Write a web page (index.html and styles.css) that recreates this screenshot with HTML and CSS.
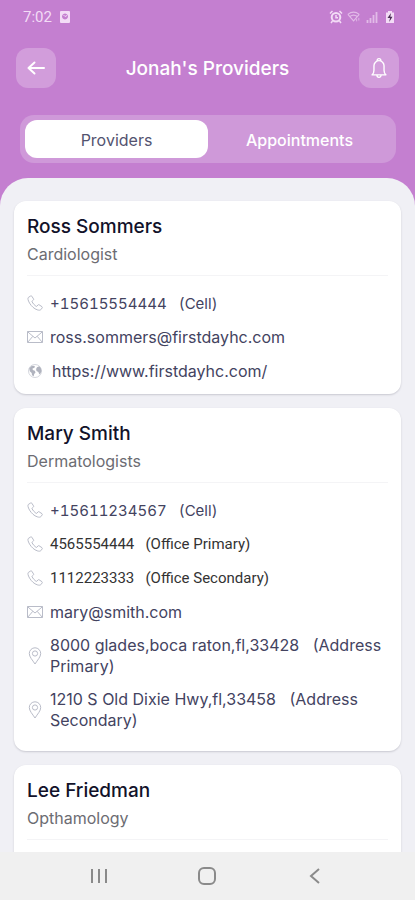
FILE: index.html
```html
<!DOCTYPE html>
<html lang="en">
<head>
<meta charset="utf-8">
<meta name="viewport" content="width=device-width, initial-scale=1">
<title>Jonah's Providers</title>
<link rel="stylesheet" href="styles.css">
</head>
<body>
<svg class="defs" aria-hidden="true">
  <symbol id="phone" viewBox="0 0 16 16"><path d="M3.6 1 1.4 2.4C.6 3 .8 5.2 2.6 8.2c1.900 3.100 4.600 5.600 7.600 6.600 1.800.6 3 .5 3.600-.1l1.400-1.800c.3-.5.2-.9-.2-1.200l-2.900-1.900c-.5-.3-.9-.2-1.200.2l-.9 1.100c-.3.400-.7.400-1.100.1C7.200 10 6 8.500 5.100 6.900c-.2-.4-.1-.8.2-1l1-.8c.4-.3.5-.7.200-1.200L4.800 1.200C4.500.8 4 .7 3.600 1z"/></symbol>
  <symbol id="mail" viewBox="0 0 16 16"><path d="M.5 2.500h15v11H.5zM.5 2.700 8 9l7.500-6.300M.7 13.300l5.100-6M15.300 13.300l-5.100-6"/></symbol>
  <symbol id="globe" viewBox="0 0 16 16"><circle cx="8" cy="8" r="6.500"/><path class="land" d="M2.200 5.200 4.800 2.700l3 .4-.3 1.700-2 .8.3 1.300 2 .9.700 1.800-1.300 1.400-.5 2.200-1.700-1-.3-2.300-1.900-1.600zM10 4.200l2.300-1 1.600 2 .6 2.800-1 2.600-1.300.600-.8-2.300-1.900-.8-.4-2z"/></symbol>
  <symbol id="pin" viewBox="0 0 16 18"><path d="M8 17C5.500 13 2.300 10 2.300 6.500a5.700 5.700 0 0 1 11.400 0C13.700 10 10.500 13 8 17z"/><circle cx="8" cy="6.500" r="2.600"/></symbol>
</svg>
<div class="app">
  <header class="top">
    <div class="status">
      <span class="clock">7:02</span>
      <svg class="s-icon" viewBox="0 0 12 14"><path fill="currentColor" fill-rule="evenodd" d="M2 1h8q1 0 1 1v10q0 1-1 1H2q-1 0-1-1V2q0-1 1-1zm4 2.500a3 3 0 1 0 .01 0z"/><path fill="none" stroke="currentColor" d="M4.500 5 6 6.500 8 5.500"/></svg>
      <span class="tray">
        <svg class="s-icon" viewBox="0 0 14 14"><circle cx="7" cy="7.300" r="4.300" fill="none" stroke="currentColor" stroke-width="2"/><path d="M7 5v2.800h2M1 3.500 3.500 1M13 3.500 10.500 1M3.500 11 2 13M10.500 11 12 13" fill="none" stroke="currentColor" stroke-width="1.500"/></svg>
        <svg class="s-icon faint" viewBox="0 0 16 14"><path d="M1 4q6.500-5 13 0M3.300 6.500q4.200-3.200 8.400 0M1 4l6.500 7.500L14 4" fill="none" stroke="currentColor" stroke-width="1.300"/><path d="M11 9v3M13.500 8v3" stroke="currentColor"/></svg>
        <svg class="s-icon faint" viewBox="0 0 12 14"><path d="M1.500 10v3M4.500 8v5M7.500 5v8M10.500 2v11" stroke="currentColor" stroke-width="1.800"/></svg>
        <svg class="s-icon" viewBox="0 0 12 14"><path d="M4 1h4v1.500h2V13H2V2.500h2z" fill="currentColor"/><path d="M7 3 3.500 8H6l-.8 4L8.500 6.800H6.300z" fill="#4b2e55"/></svg>
      </span>
    </div>
    <div class="bar">
      <button class="square" aria-label="Back"><svg class="arrow" viewBox="0 0 20 20"><path d="M18 10H2.500M8.500 4.500 2.500 10l6 5.500"/></svg></button>
      <h1>Jonah's Providers</h1>
      <button class="square" aria-label="Notifications"><svg class="bell" viewBox="0 0 20 24"><path d="M2.500 19.500c1.700-1.500 2-3 2-5V9.500a5.500 5.500 0 0 1 11 0v5c0 2 .3 3.500 2 5z"/><path d="M8 3.800a2 2 0 1 1 4 0M7.800 20a2.200 2.200 0 0 0 4.400 0"/></svg></button>
    </div>
    <nav class="tabs">
      <button class="tab active">Providers</button>
      <button class="tab">Appointments</button>
    </nav>
  </header>
  <main class="sheet">
    <article class="card">
      <header><h2>Ross Sommers</h2><p>Cardiologist</p></header>
      <ul>
        <li><svg><use href="#phone"/></svg><a class="cell" href="tel:+15615554444">+15615554444 &nbsp; (Cell)</a></li>
        <li><svg><use href="#mail"/></svg><a href="mailto:ross.sommers@firstdayhc.com">ross.sommers@firstdayhc.com</a></li>
        <li><svg class="web"><use href="#globe"/></svg><a href="https://www.firstdayhc.com/">https://www.firstdayhc.com/</a></li>
      </ul>
    </article>
    <article class="card">
      <header><h2>Mary Smith</h2><p>Dermatologists</p></header>
      <ul>
        <li><svg><use href="#phone"/></svg><a class="cell" href="tel:+15611234567">+15611234567 &nbsp; (Cell)</a></li>
        <li><svg><use href="#phone"/></svg><a class="office" href="tel:4565554444">4565554444 &nbsp; (Office Primary)</a></li>
        <li><svg><use href="#phone"/></svg><a class="office" href="tel:1112223333">1112223333 &nbsp; (Office Secondary)</a></li>
        <li><svg><use href="#mail"/></svg><a href="mailto:mary@smith.com">mary@smith.com</a></li>
      </ul>
      <ul class="places">
        <li><svg><use href="#pin"/></svg><span>8000 glades,boca raton,fl,33428 &nbsp; (Address Primary)</span></li>
        <li><svg><use href="#pin"/></svg><span>1210 S Old Dixie Hwy,fl,33458 &nbsp; (Address Secondary)</span></li>
      </ul>
    </article>
    <article class="card">
      <header><h2>Lee Friedman</h2><p>Opthamology</p></header>
      <ul><li></li></ul>
    </article>
  </main>
  <nav class="system">
    <button aria-label="Recent apps"><svg viewBox="0 0 20 20"><path d="M3 3v14M10 3v14M17 3v14"/></svg></button>
    <button aria-label="Home"><svg viewBox="0 0 20 20"><rect x="2" y="2" width="16" height="16" rx="5"/></svg></button>
    <button aria-label="Back"><svg viewBox="0 0 20 20"><path d="M14 3 6 10l8 7"/></svg></button>
  </nav>
</div>
</body>
</html>
```
FILE: styles.css
```css
* { box-sizing: border-box; }
body, h1, h2, p, ul { margin: 0; padding: 0; }
body { font-family: Inter, "Open Sans", sans-serif; background: #c47fd0; }
button { border: 0; padding: 0; background: none; font: inherit; color: inherit; }
ul { list-style: none; }
svg { display: block; flex: none; }
.defs { width: 0; height: 0; position: absolute; }

.app { height: 100vh; display: flex; flex-direction: column; }

.top { color: #fff; padding-bottom: 15px; }
.status { display: flex; align-items: center; height: 34px; padding: 0 18px 0 23px; color: #f3dcf6; }
.clock { font: 15px/34px Roboto, sans-serif; margin-right: 6px; }
.s-icon { height: 14px; width: 14px; }
.tray { display: flex; gap: 4px; margin-left: auto; }
.faint { opacity: 0.65; }

.bar { display: flex; align-items: center; justify-content: space-between; height: 40px; margin: 14px 16px 27px; }
.bar h1 { font-size: 19px; font-weight: 500; line-height: 40px; padding-top: 2px; }
.square { width: 40px; height: 40px; border-radius: 12px; background: #d29ddb; display: grid; place-items: center; }
.square svg { fill: none; stroke: #fff; stroke-width: 2; stroke-linecap: round; stroke-linejoin: round; }
.arrow { width: 20px; height: 20px; }
.bell { width: 20px; height: 22px; }
.square .bell { stroke-width: 1.500; }

.tabs { display: flex; margin: 0 19px 0 20px; padding: 5px; height: 48px; border-radius: 14px; background: #cf99d9; }
.tab { flex: 1; border-radius: 12px; font-size: 16px; line-height: 24px; padding-top: 2px; font-weight: 500; }
.tab.active { background: #fff; color: #53536f; font-weight: 400; }

.sheet { flex: 1; min-height: 0; overflow: hidden; background: #f0f0f5; border-radius: 28px 28px 0 0; padding: 23px 14px 0; }
.card { background: #fff; border-radius: 12px; padding: 13px 13px 6px; margin-bottom: 14px; box-shadow: 0 1px 2px #c8c8d0; }
.card header { border-bottom: 1px solid #f4f4f6; padding-bottom: 8px; margin-bottom: 10px; }
.card h2 { font-size: 19px; font-weight: 500; line-height: 26px; color: #12122a; }
.card p { font-size: 16px; line-height: 26px; margin-top: 1px; color: #6c6c72; }
.card li { display: flex; align-items: center; gap: 7px; min-height: 34px; font-size: 16px; line-height: 21px; color: #43435f; }
.card li a { color: inherit; text-decoration: none; }
.card li svg { width: 16px; height: 18px; fill: none; stroke: #b9bcc8; stroke-width: 1; }
.card li .web { stroke: #d5d7de; margin-right: 2px; }
.land { fill: #b0b3be; stroke: none; }
.card li .cell { font-size: 15px; font-variant-numeric: tabular-nums; }
.card li .office { font-family: Roboto, sans-serif; font-size: 15px; color: #333; }
.places { padding-bottom: 8px; }
.card .places li { padding: 6px 0; }

.system { display: flex; justify-content: center; gap: 88px; height: 48px; padding-right: 2px; background: #f0f0f0; }
.system svg { width: 20px; height: 20px; fill: none; stroke: #8a8a8a; stroke-width: 2; }
```
